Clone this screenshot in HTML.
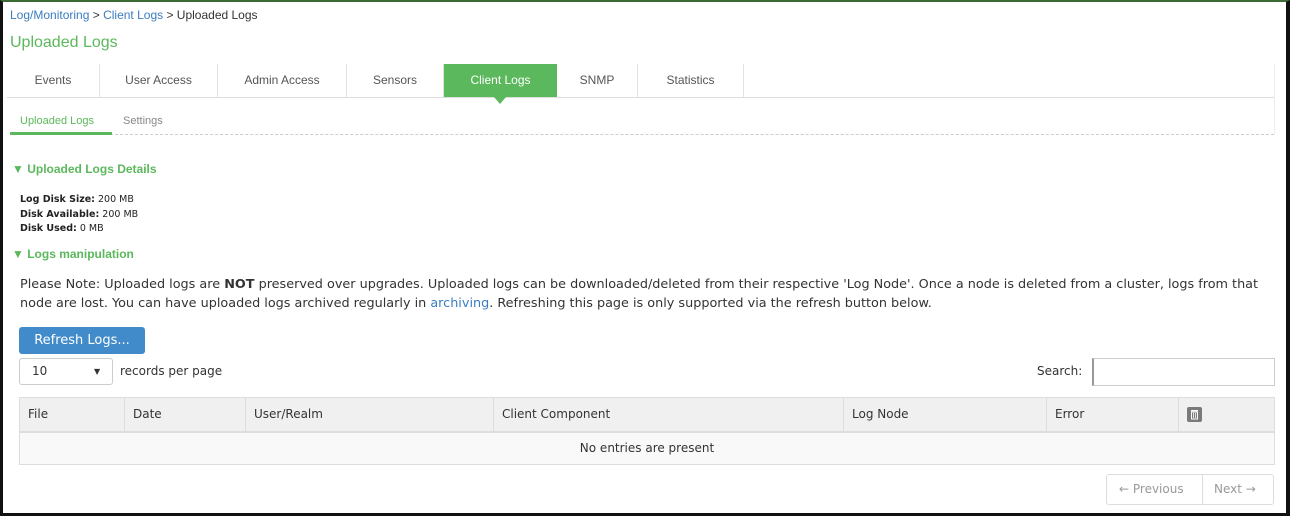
<!DOCTYPE html>
<html><head><style>
*{box-sizing:border-box;margin:0;padding:0}
body{width:1290px;height:516px;overflow:hidden;background:#fff;font-family:"DejaVu Sans","Liberation Sans",sans-serif;color:#333;position:relative}
.frame{position:absolute;left:0;top:0;width:1290px;height:516px;border-left:3px solid #111;border-right:4px solid #111;border-bottom:3px solid #111;border-top:2px solid #3d6b35;z-index:5}
.a{position:absolute;white-space:nowrap}
.ls{font-family:"Liberation Sans",sans-serif}
.tab{position:absolute;top:64px;height:33px;line-height:33px;text-align:center;font-family:"Liberation Sans",sans-serif;font-size:12px;color:#555;border-right:1px solid #e3e3e3}
th,td{font-size:12px;font-weight:normal;text-align:left}
</style></head><body>
<div class="frame"></div>
<div class="a ls" style="left:10px;top:8px;font-size:12px;color:#333"><span style="color:#3a7dc0">Log/Monitoring</span> &gt; <span style="color:#3a7dc0">Client Logs</span> &gt; Uploaded Logs</div>
<div class="a ls" style="left:10px;top:34px;font-size:16px;color:#5cb85c">Uploaded Logs</div>
<div style="position:absolute;left:7px;top:97px;width:1268px;border-top:1px solid #ddd"></div>
<div style="position:absolute;left:1274px;top:64px;height:70px;border-left:1px solid #eee"></div>
<div class="tab" style="left:7px;width:93px">Events</div>
<div class="tab" style="left:100px;width:118px">User Access</div>
<div class="tab" style="left:218px;width:129px">Admin Access</div>
<div class="tab" style="left:347px;width:97px">Sensors</div>
<div class="tab" style="left:444px;width:113px;background:#5cb85c;color:#fff;border:none">Client Logs</div>
<div style="position:absolute;left:494px;top:97px;width:0;height:0;border-left:6px solid transparent;border-right:6px solid transparent;border-top:7px solid #5cb85c"></div>
<div class="tab" style="left:557px;width:81px">SNMP</div>
<div class="tab" style="left:638px;width:106px">Statistics</div>
<div class="a ls" style="left:20px;top:115px;font-size:11px;color:#5cb85c">Uploaded Logs</div>
<div class="a ls" style="left:123px;top:115px;font-size:11px;color:#888">Settings</div>
<div style="position:absolute;left:10px;top:134px;width:1264px;border-top:1px dashed #ccc"></div>
<div style="position:absolute;left:10px;top:132px;width:102px;height:3px;background:#5cb85c"></div>
<div class="a ls" style="left:12px;top:162px;font-size:12px;font-weight:bold;color:#5cb85c">&#9660;&#xFE0E; Uploaded Logs Details</div>
<div class="a" style="left:20px;top:193px;font-size:9.5px;line-height:14.5px;color:#222"><b>Log Disk Size:</b> 200 MB<br><b>Disk Available:</b> 200 MB<br><b>Disk Used:</b> 0 MB</div>
<div class="a ls" style="left:12px;top:247px;font-size:12px;font-weight:bold;color:#5cb85c">&#9660;&#xFE0E; Logs manipulation</div>
<div class="a" style="left:20px;top:275px;font-size:12.8px;line-height:19px;color:#333">Please Note: Uploaded logs are <b>NOT</b> preserved over upgrades. Uploaded logs can be downloaded/deleted from their respective 'Log Node'. Once a node is deleted from a cluster, logs from that<br>node are lost. You can have uploaded logs archived regularly in <span style="color:#3a7dc0">archiving</span>. Refreshing this page is only supported via the refresh button below.</div>
<div class="a" style="left:19px;top:327px;width:126px;height:27px;background:#428bca;border-radius:3px;color:#fff;font-size:13px;line-height:27px;text-align:center">Refresh Logs...</div>
<div class="a" style="left:19px;top:358px;width:94px;height:27px;border:1px solid #ccc;border-radius:3px;font-size:12px;line-height:25px;padding-left:12px">10<span style="position:absolute;left:74px;font-size:8px">&#9660;</span></div>
<div class="a" style="left:120px;top:364px;font-size:12px">records per page</div>
<div class="a" style="left:1037px;top:364px;font-size:12px">Search:</div>
<div class="a" style="left:1092px;top:358px;width:183px;height:28px;border:1px solid #ccc;border-left:2px solid #999"></div>
<table style="position:absolute;left:19px;top:397px;width:1256px;border-collapse:collapse;border:1px solid #ddd">
<tr style="background:#f0f0f0;height:34px;border-bottom:2px solid #ddd">
<th style="width:105px;padding-left:8px;border-right:1px solid #ddd">File</th>
<th style="width:121px;padding-left:8px;border-right:1px solid #ddd">Date</th>
<th style="width:248px;padding-left:8px;border-right:1px solid #ddd">User/Realm</th>
<th style="width:350px;padding-left:8px;border-right:1px solid #ddd">Client Component</th>
<th style="width:203px;padding-left:8px;border-right:1px solid #ddd">Log Node</th>
<th style="width:132px;padding-left:8px;border-right:1px solid #ddd">Error</th>
<th style="padding-left:8px"><svg width="15" height="15" viewBox="0 0 15 15" style="vertical-align:middle"><rect width="15" height="15" rx="2" fill="#7a7a7a"/><rect x="4" y="3" width="7" height="1.3" fill="#fff"/><path d="M4.5 5h6v7h-6z" fill="none" stroke="#fff" stroke-width="1"/><path d="M6.5 6v5M8.5 6v5" stroke="#fff" stroke-width="0.8"/></svg></th>
</tr>
<tr style="background:#f9f9f9;height:33px"><td colspan="7" style="text-align:center">No entries are present</td></tr>
</table>
<div class="a" style="left:1106px;top:474px;width:168px;height:31px;border:1px solid #ddd;border-radius:3px;font-size:12px;color:#999;line-height:29px">
<span style="position:absolute;left:12px">← Previous</span>
<span style="position:absolute;left:95px;top:0;height:29px;border-left:1px solid #ddd"></span>
<span style="position:absolute;left:107px">Next →</span></div>
</body></html>
